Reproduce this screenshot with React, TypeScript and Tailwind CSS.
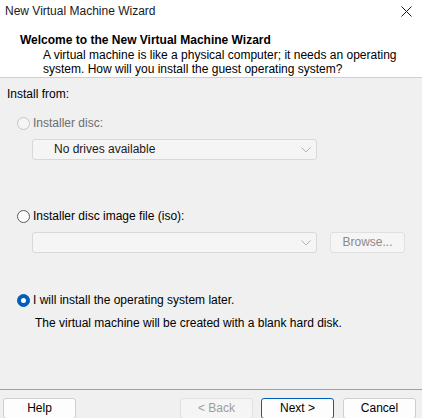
import React from "react";

const Radio = ({ checked, disabled }: { checked?: boolean; disabled?: boolean }) => (
  <span
    className={`flex h-[13px] w-[13px] shrink-0 items-center justify-center rounded-full border ${
      checked
        ? "border-[#005fb8] bg-[#005fb8]"
        : disabled
        ? "border-[#c5c5c5] bg-[#f5f5f5]"
        : "border-[#5a5a5a] bg-[#fdfdfd]"
    }`}
  >
    {checked && <span className="h-[5px] w-[5px] rounded-full bg-white" />}
  </span>
);

const Chevron = ({ disabled }: { disabled?: boolean }) => (
  <svg width="10" height="6" viewBox="0 0 10 6" className="shrink-0">
    <path d="M0.5 0.5 L5 5 L9.5 0.5" fill="none" stroke={disabled ? "#b4b4b4" : "#a0a0a0"} strokeWidth="1" />
  </svg>
);

const Combo = ({ text }: { text?: string }) => (
  <div className="flex h-[21px] w-[285px] items-center rounded-[3px] border border-[#d8d8d8] bg-[#f5f5f5] pl-[21px] pr-[5px]">
    <span className="flex-1 text-[#1a1a1a]">{text}</span>
    <Chevron disabled />
  </div>
);

const Button = ({ label, disabled, primary }: { label: string; disabled?: boolean; primary?: boolean }) => (
  <button
    className={`flex h-[21px] w-[73px] items-center justify-center rounded-[3px] border ${
      primary
        ? "border-[#005fb8] bg-[#fdfdfd] text-black"
        : disabled
        ? "border-[#e0e0e0] bg-[#f5f5f5] text-[#9d9d9d]"
        : "border-[#cfcfcf] bg-[#fdfdfd] text-black"
    }`}
  >
    {label}
  </button>
);

export default function App() {
  return (
    <div
      className="flex h-[418px] w-[422px] flex-col overflow-hidden bg-[#f0f0f0] text-[12px] leading-[15px] text-black"
      style={{ fontFamily: '"Liberation Sans", Arial, sans-serif' }}
    >
      <div className="flex h-[78px] flex-col border-b border-[#d0d0d0] bg-white">
        <div className="flex h-[19px] items-end justify-between pl-[5px] pr-[10px]">
          <span className="text-[#1a1a1a]">New Virtual Machine Wizard</span>
          <svg width="11" height="11" viewBox="0 0 11 11" className="mb-[2px]">
            <path d="M0.5 0.5 L10.5 10.5 M10.5 0.5 L0.5 10.5" stroke="#1a1a1a" strokeWidth="1" />
          </svg>
        </div>
        <div className="mt-[14px] pl-[20px] font-bold">Welcome to the New Virtual Machine Wizard</div>
        <div className="pl-[43px] leading-[14px]">
          <div>A virtual machine is like a physical computer; it needs an operating</div>
          <div>system. How will you install the guest operating system?</div>
        </div>
      </div>

      <div className="flex flex-1 flex-col">
        <div className="mt-[9px] pl-[7px]">Install from:</div>

        <div className="mt-[14px] flex items-center gap-[3px] pl-[17px] text-[#6d6d6d]">
          <Radio disabled />
          <span>Installer disc:</span>
        </div>
        <div className="mt-[8px] pl-[32px]">
          <Combo text="No drives available" />
        </div>

        <div className="mt-[49px] flex items-center gap-[3px] pl-[17px]">
          <Radio />
          <span>Installer disc image file (iso):</span>
        </div>
        <div className="mt-[8px] flex items-center pl-[32px]">
          <Combo />
          <div className="ml-[13px] flex h-[21px] w-[75px] items-center justify-center rounded-[3px] border border-[#e0e0e0] bg-[#f5f5f5] text-[#8a8a8a]">
            Browse...
          </div>
        </div>

        <div className="mt-[40px] flex items-center gap-[3px] pl-[17px]">
          <Radio checked />
          <span>I will install the operating system later.</span>
        </div>
        <div className="mt-[8px] pl-[35px]">The virtual machine will be created with a blank hard disk.</div>

        <div className="mt-auto border-t border-[#a0a0a0]" />
        <div className="flex h-[28px] items-start pt-[8px] pl-[3px]">
          <Button label="Help" />
          <div className="ml-[104px]">
            <Button label="< Back" disabled />
          </div>
          <div className="ml-[8px]">
            <Button label="Next >" primary />
          </div>
          <div className="ml-[9px]">
            <Button label="Cancel" />
          </div>
        </div>
      </div>
    </div>
  );
}
